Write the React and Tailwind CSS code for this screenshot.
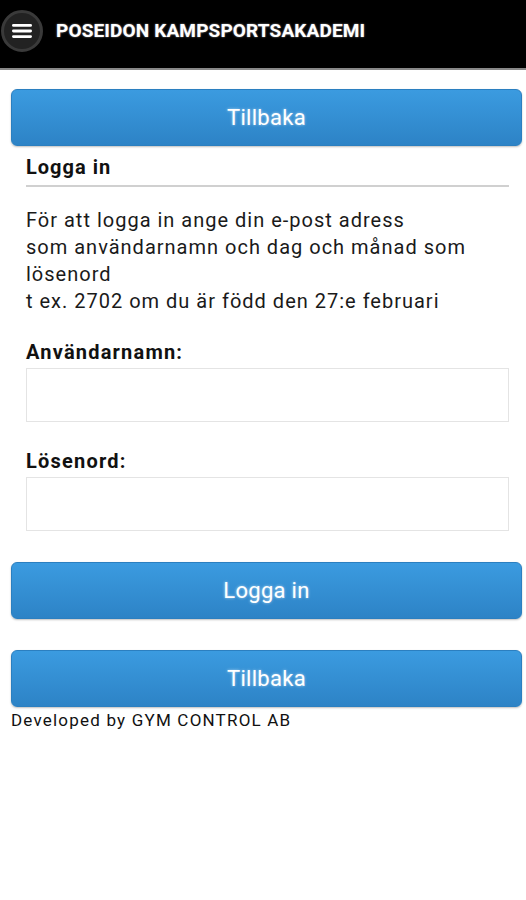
import { useState } from "react";

function BlueButton({ children }) {
  return (
    <button
      type="button"
      className="flex h-[57px] w-full items-center justify-center rounded-[6px] border border-[#2b7fc0] bg-gradient-to-b from-[#3b9be0] to-[#2d83c6] text-[22px] tracking-[0.3px] text-white shadow-[0_1px_2px_rgba(0,0,0,0.25)] [text-shadow:0_0_3px_rgba(255,255,255,0.6)]"
    >
      {children}
    </button>
  );
}

function Field({ label, type, value, onChange }) {
  return (
    <div className="flex flex-col">
      <label className="text-[20px] font-bold leading-[24px] tracking-[1.2px] text-[#111]">{label}</label>
      <input
        type={type}
        value={value}
        onChange={(e) => onChange(e.target.value)}
        className="mt-[4px] h-[54px] w-full border border-[#e4e4e4] bg-white px-2 text-[18px] outline-none"
      />
    </div>
  );
}

export default function App() {
  const [user, setUser] = useState("");
  const [pass, setPass] = useState("");

  return (
    <div className="min-h-[900px] bg-white font-['Roboto',sans-serif] text-[#111]">
      <header className="flex h-[70px] items-start border-b-2 border-[#888] bg-black">
        <div className="ml-[1px] mt-[10px] flex h-[42px] w-[42px] items-center justify-center rounded-full border-[3px] border-[#3a3a3a] bg-[#222]">
          <svg width="20" height="14" viewBox="0 0 20 14" fill="none">
            <rect x="0" y="0" width="20" height="2.8" rx="1.4" fill="#fff" />
            <rect x="0" y="5.6" width="20" height="2.8" rx="1.4" fill="#fff" />
            <rect x="0" y="11.2" width="20" height="2.8" rx="1.4" fill="#fff" />
          </svg>
        </div>
        <h1 className="ml-[13px] mt-[20px] text-[19px] font-bold leading-[22px] tracking-[0.15px] text-white [text-shadow:0_0_2px_rgba(255,255,255,0.6)]">
          POSEIDON KAMPSPORTSAKADEMI
        </h1>
      </header>

      <div className="pl-[11px] pr-[4px] pt-[19px]">
        <BlueButton>Tillbaka</BlueButton>

        <div className="pl-[15px] pr-[13px]">
          <h2 className="mt-[9px] border-b-2 border-[#d0d0d0] pb-[6px] text-[20px] font-bold leading-[24px] tracking-[1px]">
            Logga in
          </h2>
          <p className="mt-[20px] text-[20px] leading-[27px] tracking-[1px] text-[#1a1a1a]">
            För att logga in ange din e-post adress
            <br />
            som användarnamn och dag och månad som lösenord
            <br />
            t ex. 2702 om du är född den 27:e februari
          </p>

          <div className="mt-[25px] flex flex-col gap-[27px]">
            <Field label="Användarnamn:" type="text" value={user} onChange={setUser} />
            <Field label="Lösenord:" type="password" value={pass} onChange={setPass} />
          </div>
        </div>

        <div className="mt-[31px] flex flex-col gap-[31px]">
          <BlueButton>Logga in</BlueButton>
          <BlueButton>Tillbaka</BlueButton>
        </div>
        <p className="mt-[2px] text-[17px] leading-[22px] tracking-[1.2px] text-[#111]">Developed by GYM CONTROL AB</p>
      </div>
    </div>
  );
}
